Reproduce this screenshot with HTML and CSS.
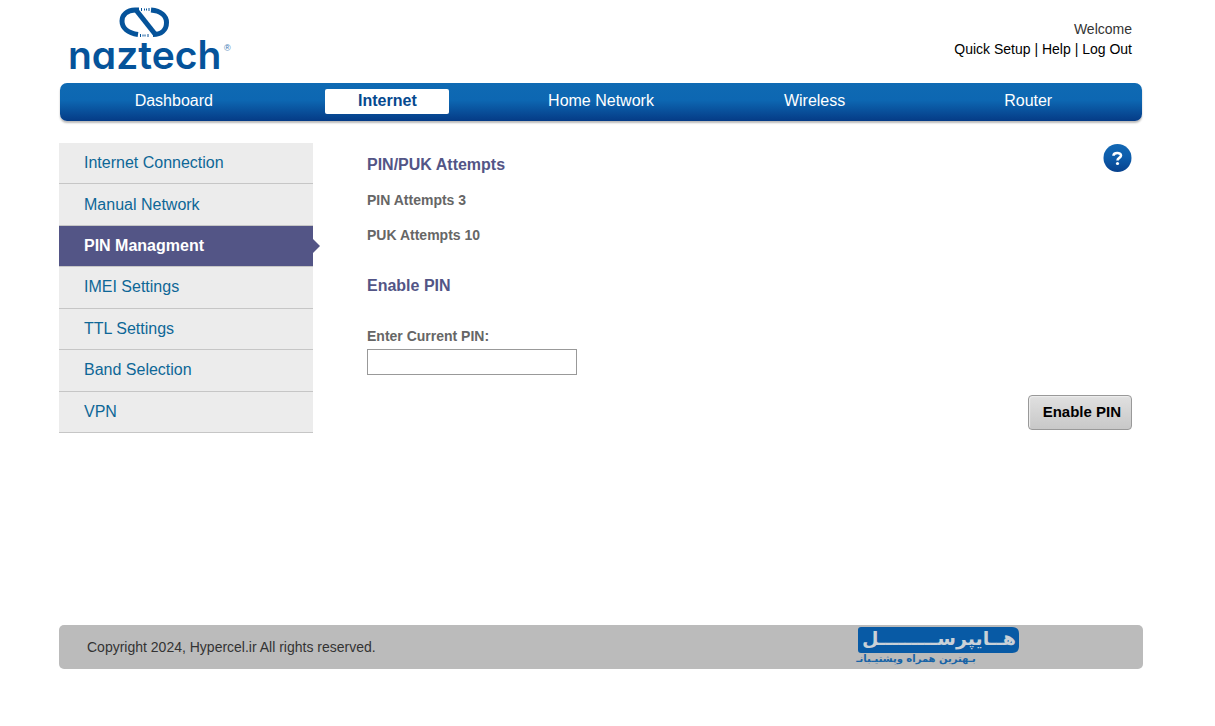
FILE: index.html
```html
<!DOCTYPE html>
<html lang="en">
<head>
<meta charset="utf-8">
<meta name="viewport" content="width=device-width, initial-scale=1">
<title>PIN Managment</title>
<link rel="stylesheet" href="styles.css">
</head>
<body>
<header class="header">
  <svg class="brand" width="164" height="70" viewBox="0 0 164 70" role="img" aria-label="naztech">
    <g class="brand-mark">
      <path d="M71 7H67C59 7 54 12 54 18C54 25 60 30 70 31.500"/>
      <path d="M68 7L87 31"/>
      <path d="M83 7C93 8 98.500 13 98.500 19.500C98.500 27 93 31.500 85 31.500"/>
    </g>
    <g class="brand-dots">
      <path d="M73.500 5V8M76.500 5.500V7.500M78.500 5.500V7.500M81 5V8M72.500 31V34M75 31.500V33.500M77 31.500V33.500M80 31V34"/>
    </g>
    <text class="brand-name" x="0" y="66">naztech</text>
    <text class="brand-reg" x="156" y="48">®</text>
  </svg>
  <div class="account">
    <span class="welcome">Welcome</span>
    <span><a href="#">Quick Setup</a> | <a href="#">Help</a> | <a href="#">Log Out</a></span>
  </div>
</header>
<nav class="tabs" aria-label="Main">
  <a href="#">Dashboard</a>
  <a href="#" class="current" aria-current="page">Internet</a>
  <a href="#">Home Network</a>
  <a href="#">Wireless</a>
  <a href="#">Router</a>
</nav>
<div class="body">
  <nav class="side" aria-label="Internet">
    <a href="#">Internet Connection</a>
    <a href="#">Manual Network</a>
    <a href="#" class="selected" aria-current="page">PIN Managment</a>
    <a href="#">IMEI Settings</a>
    <a href="#">TTL Settings</a>
    <a href="#">Band Selection</a>
    <a href="#">VPN</a>
  </nav>
  <main class="content">
    <div class="title-row">
      <h1>PIN/PUK Attempts</h1>
      <button class="help" type="button" aria-label="Help">
        <svg width="30" height="30" viewBox="0 0 30 30" aria-hidden="true">
          <defs><linearGradient id="ball" x1="0" y1="0" x2="0" y2="1"><stop offset="0" stop-color="#1268b4"/><stop offset=".5" stop-color="#0d5cab"/><stop offset="1" stop-color="#07418d"/></linearGradient></defs>
          <circle cx="15.500" cy="15" r="14" fill="url(#ball)"/>
          <path d="M11.500 12.800C11.500 9.200 19 9.200 19 12.500C19 15 15.500 14.700 15.500 17.500" fill="none" stroke="#fff" stroke-width="2.600"/>
          <circle cx="15.500" cy="20.500" r="1.600" fill="#fff"/>
        </svg>
      </button>
    </div>
    <p>PIN Attempts 3</p>
    <p>PUK Attempts 10</p>
    <form class="pin-form">
      <h1>Enable PIN</h1>
      <label for="pin">Enter Current PIN:</label>
      <input id="pin" type="password">
      <button class="submit" type="button">Enable PIN</button>
    </form>
  </main>
</div>
<footer class="footer">
  <span>Copyright 2024, Hypercel.ir All rights reserved.</span>
  <svg class="partner" width="162" height="40" viewBox="0 0 162 40" role="img" aria-label="هایپرسل">
    <path d="M3 0H154Q161 0 161 7V19Q161 26 154 26H3Q0 26 0 23V3Q0 0 3 0Z" fill="#085aa5"/>
    <text class="partner-name" x="81" y="18" direction="rtl" text-anchor="middle">هــایپرســـــــــل</text>
    <text class="partner-tag" x="58" y="35" direction="rtl" text-anchor="middle">بـهترین همراه وپشتیـبانـ</text>
  </svg>
</footer>
</body>
</html>
```
FILE: styles.css
```css
* { box-sizing: border-box; }
body {
  margin: 0;
  padding: 0 72px 0 59px;
  background: #fff;
  color: #333;
  font: 14px/20px "Liberation Sans", Arial, sans-serif;
}
a { color: inherit; text-decoration: none; }
.header {
  display: flex;
  justify-content: space-between;
  align-items: flex-start;
  min-height: 83px;
  padding: 3px 11px 0 9px;
}
.brand { overflow: visible; }
.brand-mark { fill: none; stroke: #05539a; stroke-width: 5; stroke-linejoin: round; }
.brand-dots { stroke: #05539a; stroke-width: 1; }
.brand-name {
  font: 600 39px Inter, sans-serif;
  font-feature-settings: "cv11";
  fill: #05539a;
}
.brand-reg { font: 9px "Liberation Sans", sans-serif; fill: #3a78b3; }
.account {
  display: flex;
  flex-direction: column;
  align-items: flex-end;
  padding-top: 16px;
  color: #000;
}
.welcome { color: #333; }
.tabs {
  display: grid;
  grid-template-columns: repeat(5, 1fr);
  justify-items: center;
  align-items: start;
  margin: 0 1px;
  padding: 6px 7px 7px;
  border-radius: 7px;
  background: linear-gradient(#0f6ab3, #0d67b2 45%, #053b86);
  box-shadow: 0 2px 2px #bbb;
  color: #fff;
  font-size: 16px;
  line-height: 24px;
}
.tabs a { width: 124px; padding-bottom: 1px; text-align: center; }
.tabs .current {
  border-radius: 2px;
  background: #fff;
  color: #05498f;
  font-weight: bold;
}
.body { display: flex; align-items: flex-start; gap: 54px; padding: 22px 11px 0 0; }
.side {
  display: grid;
  grid-auto-rows: 1fr;
  flex: 0 0 254px;
  min-height: 290px;
  font-size: 16px;
}
.side a {
  display: flex;
  align-items: center;
  padding: 0 25px;
  border-bottom: 1px solid #c6c6c6;
  background: #ececec;
  color: #0e6797;
}
.side .selected {
  position: relative;
  background: #535586;
  color: #fff;
  font-weight: bold;
}
.side .selected::after {
  content: "";
  position: absolute;
  left: 100%;
  top: 13px;
  border: 7px solid transparent;
  border-right: 0;
  border-left-color: #535586;
}
.content { flex: 1; min-width: 0; color: #666; font-weight: bold; }
.title-row { display: flex; justify-content: space-between; align-items: flex-start; }
h1 { margin: 0; color: #535586; font-size: 16px; line-height: 20px; }
.title-row h1 { padding-top: 12px; }
.help { display: flex; padding: 0; border: 0; background: none; }
.content p { margin: 15px 0 0; }
.pin-form { display: flex; flex-direction: column; align-items: flex-start; padding-top: 31px; }
.pin-form label { margin-top: 30px; }
.pin-form input {
  width: 210px;
  height: 26px;
  margin-top: 3px;
  padding: 2px 6px;
  border: 1px solid #999;
  background: #fff;
  font: inherit;
}
.submit {
  align-self: flex-end;
  margin-top: 20px;
  padding: 6px 10px 8px 14px;
  border: 1px solid #999;
  border-radius: 4px;
  background: linear-gradient(#e0e0e0, #c8c8c8);
  box-shadow: inset 1px 1px 1px #eee;
  color: #000;
  font: bold 15px/19px "Liberation Sans", Arial, sans-serif;
}
.footer {
  display: flex;
  justify-content: space-between;
  align-items: center;
  min-height: 44px;
  margin-top: 192px;
  padding: 0 123px 0 28px;
  border-radius: 5px;
  background: #bbb;
}
.partner { overflow: visible; }
.partner-name { font: bold 19px "DejaVu Sans", sans-serif; fill: #c9d1d8; }
.partner-tag { font: bold 10px "DejaVu Sans", sans-serif; fill: #1763a6; }
```
